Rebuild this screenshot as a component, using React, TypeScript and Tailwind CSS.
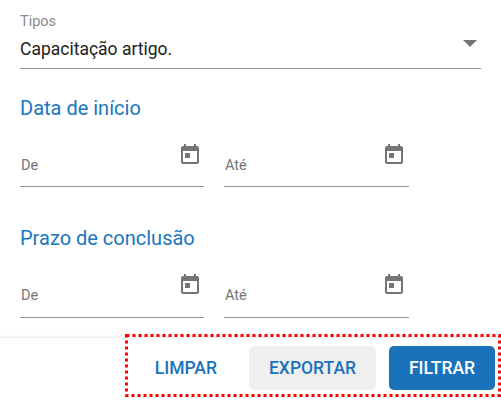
import React from "react";

const CalendarIcon = () => (
  <svg viewBox="0 0 24 24" className="w-6 h-6 fill-[#757575]">
    <path d="M19 3h-1V1h-2v2H8V1H6v2H5c-1.11 0-1.99.9-1.99 2L3 19c0 1.1.89 2 2 2h14c1.1 0 2-.9 2-2V5c0-1.1-.9-2-2-2zm0 16H5V8h14v11zM7 10h5v5H7z" />
  </svg>
);

const DateField = ({ label, size, iconGap }: { label: string; size: string; iconGap: string }) => (
  <div className={`${size} border-b border-[#949494] flex items-end justify-between`}>
    <span className="text-[14.5px] leading-[20px] text-[#757575] mb-[10px] pl-px">{label}</span>
    <span className={`mb-[19px] ${iconGap}`}>
      <CalendarIcon />
    </span>
  </div>
);

const DateRange = ({ title, gap, height }: { title: string; gap: string; height: string }) => (
  <section>
    <h2 className="text-[20px] leading-[24px] text-[#1976c0]">{title}</h2>
    <div className={`flex gap-[20px] ${gap}`}>
      <DateField label="De" size={`w-[184px] ${height}`} iconGap="mr-[2px]" />
      <DateField label="Até" size={`w-[185px] ${height}`} iconGap="mr-[3px]" />
    </div>
  </section>
);

export default function App() {
  return (
    <main className="relative w-[501px] h-[401px] overflow-hidden bg-white font-['Roboto',sans-serif]">
      <div className="px-5 pt-[13px] h-[337px]">
        <div className="w-[461px] border-b border-[#949494] h-[56px] relative">
          <p className="text-[14.5px] leading-[18px] text-[#8a8a8a]">Tipos</p>
          <p className="text-[17.5px] leading-[24px] mt-[6px] text-[#212121]">Capacitação artigo.</p>
          <span className="absolute right-[4px] top-[27px] w-0 h-0 border-x-[7px] border-x-transparent border-t-[7px] border-t-[#757575]" />
        </div>
        <div className="mt-[27px] space-y-[39px]">
          <DateRange title="Data de início" gap="mt-[23px]" height="h-[44px]" />
          <DateRange title="Prazo de conclusão" gap="mt-[23px]" height="h-[45px] pb-px" />
        </div>
      </div>

      <footer className="h-[64px] border-t border-[#f0f0f0] shadow-[0_-1px_2px_rgba(0,0,0,0.04)] flex items-start justify-end pt-[8px] pr-[6px]">
        <button className="h-[44px] px-[30px] mr-[2px] rounded-[5px] text-[17.5px] font-medium text-[#1a73ba]">LIMPAR</button>
        <button className="h-[44px] w-[127px] rounded-[5px] bg-[#efefef] text-[17.5px] font-medium text-[#1a73ba]">EXPORTAR</button>
        <button className="h-[44px] w-[106px] ml-[13px] rounded-[5px] bg-[#1a73ba] text-[17.5px] font-medium text-white">FILTRAR</button>
      </footer>

      {/* red dotted annotation over the buttons */}
      <svg className="absolute left-[125px] top-[334px] pointer-events-none" width="376" height="63">
        <rect x="1.5" y="1.5" width="373" height="60" fill="none" stroke="#ff0000" strokeWidth="3" strokeDasharray="3 3" />
      </svg>
    </main>
  );
}
